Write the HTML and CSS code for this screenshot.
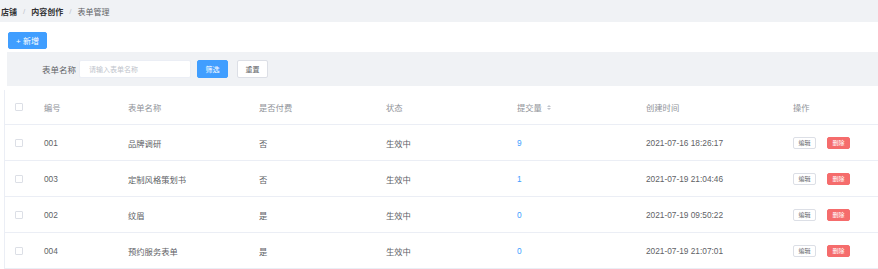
FILE: index.html
```html
<!DOCTYPE html>
<html lang="zh-CN">
<head>
    <meta charset="UTF-8">
    <title>表单管理</title>
    <link rel="stylesheet" href="styles.css">
</head>
<body>

<nav class="breadcrumb">
    <span class="crumb strong">店铺</span>
    <span class="sep">/</span>
    <span class="crumb strong">内容创作</span>
    <span class="sep">/</span>
    <span class="crumb">表单管理</span>
</nav>

<main class="card">
    <div class="toolbar">
        <button class="btn btn-primary btn-add">+ 新增</button>
    </div>

    <form class="filter-bar">
        <label class="filter-label">表单名称</label>
        <input class="filter-input" type="text" placeholder="请输入表单名称">
        <button type="button" class="btn btn-primary btn-filter">筛选</button>
        <button type="button" class="btn btn-plain btn-filter">重置</button>
    </form>

    <div class="table">
        <div class="row head">
            <div class="cell"><span class="checkbox"></span></div>
            <div class="cell">编号</div>
            <div class="cell">表单名称</div>
            <div class="cell">是否付费</div>
            <div class="cell">状态</div>
            <div class="cell">提交量 <span class="sort"><i class="up"></i><i class="down"></i></span></div>
            <div class="cell">创建时间</div>
            <div class="cell">操作</div>
        </div>

        <div class="row">
            <div class="cell"><span class="checkbox"></span></div>
            <div class="cell">001</div>
            <div class="cell">品牌调研</div>
            <div class="cell">否</div>
            <div class="cell">生效中</div>
            <div class="cell"><a class="count">9</a></div>
            <div class="cell">2021-07-16 18:26:17</div>
            <div class="cell actions">
                <button class="btn-mini btn-edit">编辑</button>
                <button class="btn-mini btn-del">删除</button>
            </div>
        </div>

        <div class="row">
            <div class="cell"><span class="checkbox"></span></div>
            <div class="cell">003</div>
            <div class="cell">定制风格策划书</div>
            <div class="cell">否</div>
            <div class="cell">生效中</div>
            <div class="cell"><a class="count">1</a></div>
            <div class="cell">2021-07-19 21:04:46</div>
            <div class="cell actions">
                <button class="btn-mini btn-edit">编辑</button>
                <button class="btn-mini btn-del">删除</button>
            </div>
        </div>

        <div class="row">
            <div class="cell"><span class="checkbox"></span></div>
            <div class="cell">002</div>
            <div class="cell">纹眉</div>
            <div class="cell">是</div>
            <div class="cell">生效中</div>
            <div class="cell"><a class="count">0</a></div>
            <div class="cell">2021-07-19 09:50:22</div>
            <div class="cell actions">
                <button class="btn-mini btn-edit">编辑</button>
                <button class="btn-mini btn-del">删除</button>
            </div>
        </div>

        <div class="row">
            <div class="cell"><span class="checkbox"></span></div>
            <div class="cell">004</div>
            <div class="cell">预约服务表单</div>
            <div class="cell">是</div>
            <div class="cell">生效中</div>
            <div class="cell"><a class="count">0</a></div>
            <div class="cell">2021-07-19 21:07:01</div>
            <div class="cell actions">
                <button class="btn-mini btn-edit">编辑</button>
                <button class="btn-mini btn-del">删除</button>
            </div>
        </div>
    </div>
</main>

</body>
</html>
```

FILE: styles.css
```css
:root {
    --bg-color: #f0f2f5;
    --primary: #409eff;
    --danger: #f56c6c;
    --text-main: #303133;
    --text-regular: #606266;
    --text-secondary: #909399;
    --text-placeholder: #c0c4cc;
    --border: #dcdfe6;
    --border-light: #ebeef5;
    --font-sans: "Liberation Sans", "Noto Sans CJK SC", sans-serif;
}

/* --- Resets --- */
* { margin: 0; padding: 0; box-sizing: border-box; }
body {
    background: var(--bg-color);
    font-family: var(--font-sans);
    color: var(--text-regular);
    width: 878px;
    height: 269px;
    overflow: hidden;
}
button, input { font-family: inherit; }

/* --- Breadcrumb --- */
.breadcrumb {
    height: 22px;
    display: flex;
    align-items: center;
    padding-left: 1px;
    font-size: 8px;
    color: var(--text-regular);
}
.breadcrumb .strong {
    font-weight: 700;
    color: var(--text-main);
}
.breadcrumb .sep {
    color: var(--text-placeholder);
    margin: 0 6px;
}

/* --- Card --- */
.card {
    background: #fff;
    padding: 8px 0 0 4px;
    height: 247px;
}

.btn {
    border: 1px solid transparent;
    border-radius: 2px;
    font-size: 8px;
    cursor: pointer;
}
.btn-primary {
    background: var(--primary);
    border-color: var(--primary);
    color: #fff;
}
.btn-plain {
    background: #fff;
    border-color: var(--border);
    color: var(--text-regular);
}

.toolbar { padding-left: 4px; }
.btn-add {
    width: 39px;
    height: 17px;
}

/* --- Filter Bar --- */
.filter-bar {
    margin: 3px 0 0 3px;
    height: 34px;
    background: var(--bg-color);
    display: flex;
    align-items: center;
    padding-left: 35px;
}
.filter-label {
    font-size: 8.5px;
    color: var(--text-regular);
    margin-right: 3px;
}
.filter-input {
    width: 112px;
    height: 18px;
    border: 1px solid var(--border-light);
    border-radius: 2px;
    padding-left: 9px;
    font-size: 7px;
    outline: none;
}
.filter-input::placeholder { color: var(--text-placeholder); }
.btn-filter {
    width: 31px;
    height: 18px;
    margin-left: 6px;
    font-size: 7px;
}
.btn-filter.btn-plain { margin-left: 9px; }

/* --- Table --- */
.table {
    margin-top: 4px;
    border-left: 1px solid var(--border-light);
}
.row {
    display: grid;
    grid-template-columns: 29px 84px 131px 127px 131px 129px 147px 1fr;
    height: 36px;
    border-bottom: 1px solid var(--border-light);
    font-size: 8.3px;
    color: var(--text-regular);
}
.row.head {
    height: 35px;
    color: var(--text-secondary);
}
.cell {
    display: flex;
    align-items: center;
    padding-left: 10px;
    white-space: nowrap;
}
.checkbox {
    width: 8px;
    height: 8px;
    border: 1px solid var(--border);
    border-radius: 1px;
    background: #fff;
}

.sort {
    display: inline-flex;
    flex-direction: column;
    gap: 1px;
    margin-left: 5px;
}
.sort i {
    width: 0;
    height: 0;
    border-left: 2px solid transparent;
    border-right: 2px solid transparent;
}
.sort .up { border-bottom: 2px solid var(--text-placeholder); }
.sort .down { border-top: 2px solid var(--text-placeholder); }

.count { color: var(--primary); }

.actions { gap: 11px; }
.btn-mini {
    width: 23px;
    height: 12px;
    border-radius: 2px;
    font-size: 6px;
    border: 1px solid var(--border);
    background: #fff;
    color: var(--text-regular);
}
.btn-del {
    background: var(--danger);
    border-color: var(--danger);
    color: #fff;
}
```
